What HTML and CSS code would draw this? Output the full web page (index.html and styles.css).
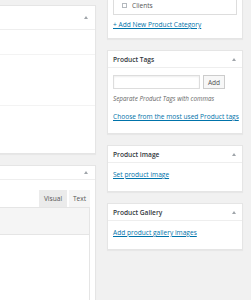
FILE: index.html
```html
<!DOCTYPE html>
<html lang="en">
<head>
  <meta charset="UTF-8">
  <title>Edit Product</title>
  <link rel="stylesheet" href="styles.css">
</head>
<body>
  <div class="wrap">

    <div class="main">
      <div class="panel data-panel">
        <div class="panel-head tall"><span class="toggle"></span></div>
        <div class="data-row first"></div>
        <div class="data-row second"></div>
      </div>

      <div class="panel editor-panel">
        <div class="panel-head short"><span class="toggle"></span></div>
        <div class="editor-wrap">
          <div class="editor-tabs">
            <span class="tab visual">Visual</span>
            <span class="tab text active">Text</span>
          </div>
          <div class="editor-toolbar"></div>
          <div class="editor-area"></div>
        </div>
      </div>
    </div>

    <div class="side">
      <div class="box cat-box">
        <div class="box-body">
          <ul class="cat-list">
            <li><span class="check"></span>Clients</li>
          </ul>
          <a href="#" class="link add-cat">+ Add New Product Category</a>
        </div>
      </div>

      <div class="box">
        <div class="box-head">Product Tags<span class="toggle"></span></div>
        <div class="box-body">
          <div class="tag-form">
            <input type="text" class="tag-input">
            <button class="btn">Add</button>
          </div>
          <p class="hint">Separate Product Tags with commas</p>
          <a href="#" class="link">Choose from the most used Product tags</a>
        </div>
      </div>

      <div class="box">
        <div class="box-head">Product Image<span class="toggle"></span></div>
        <div class="box-body">
          <a href="#" class="link">Set product image</a>
        </div>
      </div>

      <div class="box">
        <div class="box-head">Product Gallery<span class="toggle"></span></div>
        <div class="box-body">
          <a href="#" class="link">Add product gallery images</a>
        </div>
      </div>
    </div>

  </div>
</body>
</html>
```

FILE: styles.css
```css
* {
  box-sizing: border-box;
}
body {
  margin: 0;
  background: #f1f1f1;
  font-family: 'Open Sans', sans-serif;
  font-size: 6.6px;
  color: #444;
  overflow: hidden;
}

.wrap {
  display: flex;
  align-items: flex-start;
  gap: 11px;
  height: 300px;
  overflow: hidden;
}

/* left column */
.main {
  width: 96px;
  display: flex;
  flex-direction: column;
  gap: 11px;
  padding-top: 5px;
}

.panel {
  flex-shrink: 0;
  background: #fff;
  border: 1px solid #e5e5e5;
  border-left: 0;
  box-shadow: 0 1px 1px rgba(0, 0, 0, 0.04);
}

.data-panel {
  height: 149px;
}
.editor-panel {
  height: 135px;
  border-bottom: 0;
}

.panel-head {
  display: flex;
  justify-content: flex-end;
  align-items: center;
  padding-right: 7px;
  border-bottom: 1px solid #eee;
}
.panel-head.tall {
  height: 24px;
}
.panel-head.short {
  height: 14px;
}

.data-row {
  border-bottom: 1px solid #f3f3f3;
}
.data-row.first {
  height: 25px;
}
.data-row.second {
  height: 51px;
}

.toggle {
  width: 0;
  height: 0;
  border-left: 2px solid transparent;
  border-right: 2px solid transparent;
  border-bottom: 3px solid #a0a5aa;
}

.editor-wrap {
  padding: 10px 5px 0 0;
}
.editor-tabs {
  display: flex;
  justify-content: flex-end;
  gap: 2px;
}
.tab {
  height: 17px;
  line-height: 17px;
  text-align: center;
  background: #ebebeb;
  color: #555;
  font-size: 6.6px;
}
.tab.visual {
  width: 28px;
}
.tab.text {
  width: 21px;
}
.tab.active {
  background: #f5f5f5;
}
.editor-toolbar {
  height: 28px;
  background: #f5f5f5;
  border: 1px solid #e5e5e5;
  border-left: 0;
}
.editor-area {
  height: 70px;
  border-right: 1px solid #e5e5e5;
}

/* right column */
.side {
  width: 136px;
  display: flex;
  flex-direction: column;
  gap: 11px;
}

.box {
  background: #fff;
  border: 1px solid #e5e5e5;
  box-shadow: 0 1px 1px rgba(0, 0, 0, 0.04);
}
.cat-box {
  border-top: 0;
}

.box-head {
  height: 17px;
  display: flex;
  justify-content: space-between;
  align-items: center;
  padding: 0 6px 0 5px;
  border-bottom: 1px solid #eee;
  font-weight: 600;
  color: #32373c;
}

.box-body {
  padding: 7px 5px 11px;
}
.cat-box .box-body {
  padding-top: 0;
  padding-bottom: 8px;
}

.cat-list {
  list-style: none;
  margin: 0 0 5px;
  padding: 0 0 3px 8px;
  border: 1px solid #ddd;
  border-top: 0;
  color: #555;
}
.cat-list li {
  display: flex;
  align-items: center;
  gap: 5px;
  height: 11px;
}
.check {
  width: 5px;
  height: 5px;
  border: 1px solid #b4b9be;
  background: #fff;
}

.link {
  color: #0073aa;
  text-decoration: underline;
  line-height: 10px;
  white-space: nowrap;
  display: inline-block;
}

.tag-form {
  display: flex;
  gap: 3px;
}
.tag-input {
  width: 87px;
  height: 14px;
  margin: 0;
  border: 1px solid #ddd;
  box-shadow: inset 0 1px 2px rgba(0, 0, 0, 0.07);
}
.btn {
  width: 22px;
  height: 14px;
  padding: 0;
  border: 1px solid #ccc;
  background: #f7f7f7;
  color: #555;
  font-family: 'Open Sans', sans-serif;
  font-size: 6.6px;
}

.hint {
  margin: 5px 0 9px;
  font-style: italic;
  color: #666;
  font-size: 6.3px;
}
```
